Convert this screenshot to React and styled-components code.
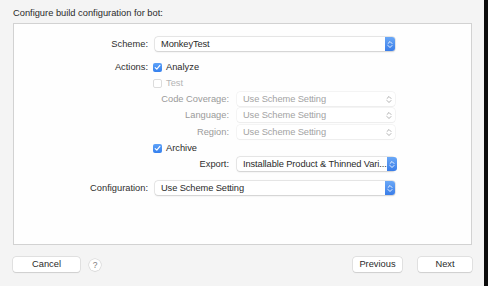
import React from "react";
import styled, { createGlobalStyle } from "styled-components";

const Global = createGlobalStyle`
  html, body { margin: 0; padding: 0; background: #f3f3f3; }
  body { font-family: "Liberation Sans", Arial, sans-serif; font-size: 9.3px; color: #2e2e2e; }
`;

const Page = styled.div`
  display: flex;
  width: 488px;
  height: 286px;
  overflow: hidden;
`;

const Main = styled.div`
  width: 484px;
  padding: 7px 12px 0 13px;
  box-sizing: border-box;
  display: flex;
  flex-direction: column;
  background: #f4f4f4;
`;

const Edge = styled.div`
  flex: 1;
  background: #0c0c0c;
`;

const Title = styled.div`
  height: 13px;
  line-height: 13px;
  color: #2a2a2a;
`;

const Panel = styled.div`
  margin-top: 3px;
  height: 222px;
  box-sizing: border-box;
  border: 1px solid #d2d2d2;
  background: #fefefe;
  padding-top: 12px;
  display: flex;
  flex-direction: column;
`;

const Row = styled.div`
  display: flex;
  align-items: center;
  height: ${(p) => p.$h || 16}px;
  margin-top: ${(p) => p.$mt || 0}px;
`;

const Label = styled.div`
  width: ${(p) => p.$w}px;
  text-align: right;
  color: ${(p) => (p.$dim ? "#9a9a9a" : "#2e2e2e")};
  flex-shrink: 0;
`;

const Popup = styled.div`
  margin-left: ${(p) => p.$ml}px;
  width: ${(p) => p.$w}px;
  height: 14px;
  box-sizing: border-box;
  display: flex;
  align-items: center;
  background: #fff;
  border-radius: 3px;
  box-shadow: ${(p) =>
    p.$disabled
      ? "0 0 0 0.5px #ececec, 0 0.5px 1px rgba(0,0,0,0.06)"
      : "0 0 0 0.5px #d4d4d4, 0 0.5px 1.5px rgba(0,0,0,0.18)"};
  color: ${(p) => (p.$disabled ? "#a3a3a3" : "#2a2a2a")};
  padding-left: 6px;
`;

const PopupText = styled.span`
  flex: 1;
  white-space: nowrap;
  letter-spacing: -0.1px;
`;

const Stepper = styled.div`
  width: 10px;
  height: 14px;
  border-radius: 0 3px 3px 0;
  background: linear-gradient(#6aa8f7, #3a7de8);
  display: flex;
  align-items: center;
  justify-content: center;
  flex-shrink: 0;
`;

const GreyStepper = styled.div`
  width: 12px;
  height: 14px;
  display: flex;
  align-items: center;
  justify-content: center;
  flex-shrink: 0;
`;

const Box = styled.div`
  margin-left: ${(p) => p.$ml}px;
  width: 9px;
  height: 9px;
  box-sizing: border-box;
  border-radius: 2px;
  background: ${(p) => (p.$checked ? "linear-gradient(#5ea2f8, #3580ee)" : "#fff")};
  border: ${(p) => (p.$checked ? "none" : "0.5px solid #dcdcdc")};
  display: flex;
  align-items: center;
  justify-content: center;
  flex-shrink: 0;
`;

const BoxLabel = styled.span`
  margin-left: 4px;
  color: ${(p) => (p.$dim ? "#b5b5b5" : "#2a2a2a")};
`;

const Footer = styled.div`
  margin-top: 12px;
  display: flex;
  align-items: center;
  height: 15px;
`;

const Button = styled.div`
  width: ${(p) => p.$w}px;
  margin-left: ${(p) => p.$ml || 0}px;
  height: 15px;
  line-height: 15px;
  text-align: center;
  background: #fff;
  border-radius: 3px;
  box-shadow: 0 0 0 0.5px #d0d0d0, 0 0.5px 1px rgba(0,0,0,0.15);
  color: #2a2a2a;
`;

const Help = styled.div`
  margin-left: 9px;
  width: 12px;
  height: 12px;
  border-radius: 50%;
  background: #fff;
  box-shadow: 0 0 0 0.5px #cfcfcf, 0 0.5px 1px rgba(0,0,0,0.12);
  color: #7a7a7a;
  font-size: 8.5px;
  line-height: 12px;
  text-align: center;
`;

const Spacer = styled.div`
  flex: 1;
`;

const Chevrons = ({ color }) => (
  <svg width="6" height="9" viewBox="0 0 6 9">
    <path d="M1 3.5 L3 1.5 L5 3.5 M1 5.5 L3 7.5 L5 5.5" fill="none" stroke={color} strokeWidth="0.9" strokeLinecap="round" strokeLinejoin="round" />
  </svg>
);

const Check = () => (
  <svg width="7" height="7" viewBox="0 0 7 7">
    <path d="M1.2 3.6 L2.8 5.2 L5.9 1.4" fill="none" stroke="#fff" strokeWidth="1.2" strokeLinecap="round" strokeLinejoin="round" />
  </svg>
);

const Select = ({ ml, w, text, disabled }) => (
  <Popup $ml={ml} $w={w} $disabled={disabled}>
    <PopupText>{text}</PopupText>
    {disabled ? (
      <GreyStepper><Chevrons color="#a8a8a8" /></GreyStepper>
    ) : (
      <Stepper><Chevrons color="#fff" /></Stepper>
    )}
  </Popup>
);

export default function App() {
  return (
    <Page>
      <Global />
      <Main>
        <Title>Configure build configuration for bot:</Title>
        <Panel>
          <Row $h={16}>
            <Label $w={134}>Scheme:</Label>
            <Select ml={7} w={240} text="MonkeyTest" />
          </Row>
          <Row $mt={7}>
            <Label $w={134}>Actions:</Label>
            <Box $ml={5} $checked><Check /></Box>
            <BoxLabel>Analyze</BoxLabel>
          </Row>
          <Row>
            <Box $ml={139} />
            <BoxLabel $dim>Test</BoxLabel>
          </Row>
          <Row>
            <Label $w={215} $dim>Code Coverage:</Label>
            <Select ml={8} w={158} text="Use Scheme Setting" disabled />
          </Row>
          <Row>
            <Label $w={215} $dim>Language:</Label>
            <Select ml={8} w={158} text="Use Scheme Setting" disabled />
          </Row>
          <Row $mt={1}>
            <Label $w={215} $dim>Region:</Label>
            <Select ml={8} w={158} text="Use Scheme Setting" disabled />
          </Row>
          <Row>
            <Box $ml={139} $checked><Check /></Box>
            <BoxLabel>Archive</BoxLabel>
          </Row>
          <Row>
            <Label $w={215}>Export:</Label>
            <Select ml={8} w={158} text="Installable Product & Thinned Vari..." />
          </Row>
          <Row $mt={8}>
            <Label $w={134}>Configuration:</Label>
            <Select ml={7} w={240} text="Use Scheme Setting" />
          </Row>
        </Panel>
        <Footer>
          <Button $w={67}>Cancel</Button>
          <Help>?</Help>
          <Spacer />
          <Button $w={49}>Previous</Button>
          <Button $w={54} $ml={16}>Next</Button>
        </Footer>
      </Main>
      <Edge />
    </Page>
  );
}
